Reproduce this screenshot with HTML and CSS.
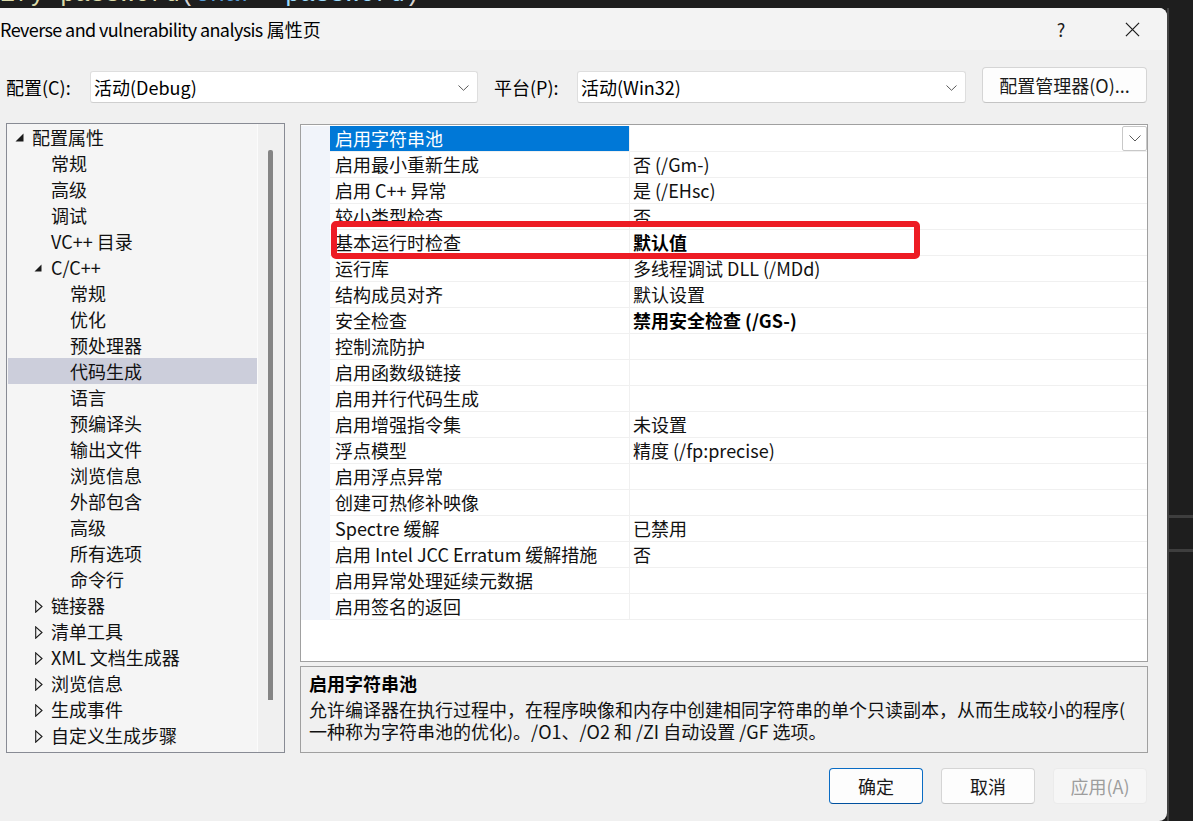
FILE: index.html
```html
<!DOCTYPE html>
<html lang="zh-CN">
<head>
<meta charset="utf-8">
<title>属性页</title>
<link rel="stylesheet" href="styles.css">
</head>
<body>
<div class="code"><div class="code-text"><span class="c-fn">ify password</span><span class="c-p">(</span><span class="c-kw">char</span><span class="c-p">* </span><span class="c-var">password</span><span class="c-p">)</span></div></div>
<div class="stage">
  <div class="dialog">
    <div class="titlebar">
      <span class="title"><span class="title-en">Reverse and vulnerability analysis</span> 属性页</span>
      <span class="help">?</span>
      <span class="close"><svg width="16" height="16" viewBox="0 0 16 16"><path d="M1 1 L15 15 M15 1 L1 15" stroke="#1a1a1a" stroke-width="1.3" fill="none"/></svg></span>
    </div>
    <div class="config">
      <span class="lbl lbl1">配置(C):</span>
      <div class="combo combo1"><span>活动(Debug)</span><svg class="chev" width="11" height="6" viewBox="0 0 11 6"><path d="M0.5 0.5 L5.5 5.3 L10.5 0.5" stroke="#5a5a5a" stroke-width="1" fill="none"/></svg></div>
      <span class="lbl lbl2">平台(P):</span>
      <div class="combo combo2"><span>活动(Win32)</span><svg class="chev" width="11" height="6" viewBox="0 0 11 6"><path d="M0.5 0.5 L5.5 5.3 L10.5 0.5" stroke="#5a5a5a" stroke-width="1" fill="none"/></svg></div>
      <button class="btn mgr">配置管理器(O)...</button>
    </div>
    <div class="main">
      <div class="tree">
        <div class="tree-list">
          <div class="trow l0"><span class="tog"><svg width="9" height="9" viewBox="0 0 9 9"><path d="M8.5 0.5 L8.5 8.5 L0.5 8.5 Z" fill="#1a1a1a"/></svg></span>配置属性</div>
          <div class="trow l1"><span class="tog"></span>常规</div>
          <div class="trow l1"><span class="tog"></span>高级</div>
          <div class="trow l1"><span class="tog"></span>调试</div>
          <div class="trow l1"><span class="tog"></span>VC++ 目录</div>
          <div class="trow l1"><span class="tog"><svg width="8" height="8" viewBox="0 0 8 8"><path d="M7.5 0.5 L7.5 7.5 L0.5 7.5 Z" fill="#1a1a1a"/></svg></span>C/C++</div>
          <div class="trow l2"><span class="tog"></span>常规</div>
          <div class="trow l2"><span class="tog"></span>优化</div>
          <div class="trow l2"><span class="tog"></span>预处理器</div>
          <div class="trow l2 sel"><span class="tog"></span>代码生成</div>
          <div class="trow l2"><span class="tog"></span>语言</div>
          <div class="trow l2"><span class="tog"></span>预编译头</div>
          <div class="trow l2"><span class="tog"></span>输出文件</div>
          <div class="trow l2"><span class="tog"></span>浏览信息</div>
          <div class="trow l2"><span class="tog"></span>外部包含</div>
          <div class="trow l2"><span class="tog"></span>高级</div>
          <div class="trow l2"><span class="tog"></span>所有选项</div>
          <div class="trow l2"><span class="tog"></span>命令行</div>
          <div class="trow l1"><span class="tog"><svg class="col" width="8" height="13" viewBox="0 0 8 13"><path d="M0.7 0.8 L7 6.5 L0.7 12.2 Z" stroke="#1a1a1a" stroke-width="1.1" fill="none"/></svg></span>链接器</div>
          <div class="trow l1"><span class="tog"><svg class="col" width="8" height="13" viewBox="0 0 8 13"><path d="M0.7 0.8 L7 6.5 L0.7 12.2 Z" stroke="#1a1a1a" stroke-width="1.1" fill="none"/></svg></span>清单工具</div>
          <div class="trow l1"><span class="tog"><svg class="col" width="8" height="13" viewBox="0 0 8 13"><path d="M0.7 0.8 L7 6.5 L0.7 12.2 Z" stroke="#1a1a1a" stroke-width="1.1" fill="none"/></svg></span>XML 文档生成器</div>
          <div class="trow l1"><span class="tog"><svg class="col" width="8" height="13" viewBox="0 0 8 13"><path d="M0.7 0.8 L7 6.5 L0.7 12.2 Z" stroke="#1a1a1a" stroke-width="1.1" fill="none"/></svg></span>浏览信息</div>
          <div class="trow l1"><span class="tog"><svg class="col" width="8" height="13" viewBox="0 0 8 13"><path d="M0.7 0.8 L7 6.5 L0.7 12.2 Z" stroke="#1a1a1a" stroke-width="1.1" fill="none"/></svg></span>生成事件</div>
          <div class="trow l1"><span class="tog"><svg class="col" width="8" height="13" viewBox="0 0 8 13"><path d="M0.7 0.8 L7 6.5 L0.7 12.2 Z" stroke="#1a1a1a" stroke-width="1.1" fill="none"/></svg></span>自定义生成步骤</div>
        </div>
        <div class="tree-scroll"><div class="thumb"></div></div>
      </div>
      <div class="right">
        <div class="grid">
          <div class="prow"><div class="gut"></div><div class="pname sel">启用字符串池</div><div class="pval"><span></span><span class="dd"><svg width="12" height="7" viewBox="0 0 12 7"><path d="M0.5 0.5 L6 6 L11.5 0.5" stroke="#5a5a5a" stroke-width="1" fill="none"/></svg></span></div></div>
          <div class="prow"><div class="gut"></div><div class="pname">启用最小重新生成</div><div class="pval">否 (/Gm-)</div></div>
          <div class="prow"><div class="gut"></div><div class="pname">启用 C++ 异常</div><div class="pval">是 (/EHsc)</div></div>
          <div class="prow"><div class="gut"></div><div class="pname">较小类型检查</div><div class="pval">否</div></div>
          <div class="prow"><div class="gut"></div><div class="pname">基本运行时检查</div><div class="pval b">默认值</div></div>
          <div class="prow"><div class="gut"></div><div class="pname">运行库</div><div class="pval">多线程调试 DLL (/MDd)</div></div>
          <div class="prow"><div class="gut"></div><div class="pname">结构成员对齐</div><div class="pval">默认设置</div></div>
          <div class="prow"><div class="gut"></div><div class="pname">安全检查</div><div class="pval b">禁用安全检查 (/GS-)</div></div>
          <div class="prow"><div class="gut"></div><div class="pname">控制流防护</div><div class="pval"></div></div>
          <div class="prow"><div class="gut"></div><div class="pname">启用函数级链接</div><div class="pval"></div></div>
          <div class="prow"><div class="gut"></div><div class="pname">启用并行代码生成</div><div class="pval"></div></div>
          <div class="prow"><div class="gut"></div><div class="pname">启用增强指令集</div><div class="pval">未设置</div></div>
          <div class="prow"><div class="gut"></div><div class="pname">浮点模型</div><div class="pval">精度 (/fp:precise)</div></div>
          <div class="prow"><div class="gut"></div><div class="pname">启用浮点异常</div><div class="pval"></div></div>
          <div class="prow"><div class="gut"></div><div class="pname">创建可热修补映像</div><div class="pval"></div></div>
          <div class="prow"><div class="gut"></div><div class="pname">Spectre 缓解</div><div class="pval">已禁用</div></div>
          <div class="prow"><div class="gut"></div><div class="pname">启用 Intel JCC Erratum 缓解措施</div><div class="pval">否</div></div>
          <div class="prow"><div class="gut"></div><div class="pname">启用异常处理延续元数据</div><div class="pval"></div></div>
          <div class="prow"><div class="gut"></div><div class="pname">启用签名的返回</div><div class="pval"></div></div>
          <div class="mark"></div>
        </div>
        <div class="desc">
          <div class="desc-title">启用字符串池</div>
          <div class="desc-text">允许编译器在执行过程中，在程序映像和内存中创建相同字符串的单个只读副本，从而生成较小的程序(</div>
          <div class="desc-text">一种称为字符串池的优化)。/O1、/O2 和 /ZI 自动设置 /GF 选项。</div>
        </div>
      </div>
    </div>
    <div class="actions">
      <button class="btn act primary">确定</button>
      <button class="btn act">取消</button>
      <button class="btn act disabled">应用(A)</button>
    </div>
  </div>
  <div class="side"><div class="sline"></div><div class="sline s2"></div></div>
</div>
</body>
</html>
```

FILE: styles.css
```css
* { box-sizing: border-box; }
html, body { margin: 0; padding: 0; }
body {
  background: #1e1e1e;
  font-family: "Noto Sans CJK SC", "Noto Sans", sans-serif;
  font-size: 18px;
  color: #000;
  width: 1193px;
  height: 821px;
  overflow: hidden;
}
.code { height: 8px; overflow: hidden; }
.code-text {
  font-family: "Liberation Mono", monospace;
  font-size: 25px;
  line-height: 25px;
  margin-top: -18px;
  white-space: nowrap;
  color: #d4d4d4;
}
.c-fn { color: #dcdcaa; }
.c-p { color: #d4d4d4; }
.c-kw { color: #569cd6; }
.c-var { color: #9cdcfe; }

.stage { display: flex; height: 813px; }
.dialog {
  width: 1167px;
  background: #f0f0f0;
  border-radius: 0 8px 8px 0;
  display: flex;
  flex-direction: column;
}
.titlebar {
  height: 42px;
  background: #f3f3f3;
  border-radius: 0 8px 0 0;
  display: flex;
  align-items: center;
  padding-left: 0;
  padding-right: 12px;
}
.title { flex: 1; line-height: 24px; white-space: nowrap; }
.title-en { letter-spacing: -0.6px; }
.help { width: 40px; text-align: center; color: #1a1a1a; line-height: 24px; }
.close { width: 46px; margin-left: 28px; display: flex; justify-content: center; align-items: center; height: 24px; }
.close svg { width: 15px; height: 15px; }

.config {
  display: flex;
  align-items: flex-start;
  padding-left: 6px;
  margin-top: 17px;
  height: 36px;
}
.lbl { line-height: 36px; white-space: nowrap; margin-top: 2px; }
.lbl1 { width: 84px; }
.lbl2 { width: 83px; margin-left: 16px; }
.combo {
  height: 32px;
  margin-top: 4px;
  background: #fff;
  border: 1px solid #dedede;
  border-bottom-color: #cfcfcf;
  border-radius: 3px;
  display: flex;
  align-items: center;
  justify-content: space-between;
  padding: 0 8px 0 3px;
  line-height: 30px;
}
.combo1 { width: 388px; }
.combo2 { width: 389px; }
.chev { margin-top: 1px; }
.btn {
  font-family: "Noto Sans CJK SC", "Noto Sans", sans-serif;
  font-size: 18px;
  background: #fdfdfd;
  border: 1px solid #d5d5d5;
  border-bottom-color: #c4c4c4;
  border-radius: 4px;
  color: #1a1a1a;
  padding: 0;
  height: 36px;
  line-height: 34px;
}
.mgr { width: 165px; margin-left: 16px; }

.main {
  display: flex;
  margin-top: 20px;
  padding-left: 6px;
  gap: 15px;
}
.tree {
  width: 279px;
  height: 630px;
  border: 1px solid #888b94;
  display: flex;
  background: #f5f5f5;
}
.tree-list { width: 250px; padding-left: 1px; }
.trow {
  height: 26px;
  line-height: 26px;
  display: flex;
  align-items: center;
  white-space: nowrap;
  color: #111;
}
.trow.l0 { padding-left: 7px; }
.trow.l1 { padding-left: 26px; }
.trow.l2 { padding-left: 45px; }
.trow.sel { background: #cccedb; }
.tog { width: 17px; height: 26px; display: flex; align-items: center; padding-top: 1px; }
.tog .col { margin-left: 1px; margin-top: 2px; }
.tree-scroll {
  flex: 1;
  background: #f0f0f0;
  border-left: 1px solid #fbfbfb;
  padding-top: 26px;
}
.thumb {
  width: 5px;
  height: 550px;
  margin-left: 10px;
  background: #858585;
  border-radius: 2px 2px 0 0;
}

.right { width: 848px; margin-top: 1px; display: flex; flex-direction: column; }
.grid {
  position: relative;
  height: 538px;
  background: #fff;
  border: 1px solid #a0a0a0;
  padding-top: 1px;
}
.prow { display: flex; height: 26px; }
.gut { width: 29px; background: #f1f4fa; }
.pname {
  width: 300px;
  padding-left: 5px;
  border-right: 1px solid #f0f0f0;
  border-bottom: 1px solid #f0f0f0;
  line-height: 25px;
  white-space: nowrap;
  color: #111;
}
.pname.sel { background: #0078d7; color: #fff; }
.pval {
  flex: 1;
  padding-left: 3px;
  border-bottom: 1px solid #f0f0f0;
  line-height: 25px;
  white-space: nowrap;
  display: flex;
  justify-content: space-between;
  color: #111;
}
.pval.b { font-weight: 700; color: #000; }
.dd {
  width: 25px;
  height: 25px;
  border: 1px solid #c8c8c8;
  border-radius: 2px;
  background: #fff;
  display: flex;
  align-items: center;
  justify-content: center;
}
.mark {
  position: absolute;
  left: 30px;
  top: 96px;
  width: 589px;
  height: 38px;
  border: 6px solid #ed1c24;
  border-radius: 5px;
}
.desc {
  margin-top: 4px;
  height: 87px;
  border: 1px solid #a0a0a0;
  background: #f0f0f0;
  padding: 5px 8px 0 8px;
}
.desc-title { font-weight: 700; line-height: 22px; height: 26px; }
.desc-text { height: 22px; line-height: 22px; white-space: nowrap; color: #111; }

.actions {
  display: flex;
  justify-content: flex-end;
  gap: 18px;
  margin-top: 15px;
  padding-right: 20px;
}
.act { width: 94px; }
.primary { border: 1px solid #0a6cc4; border-bottom-color: #00509e; }
.disabled { background: #f6f6f6; border-color: #ebebeb; color: #9d9d9d; }

.side {
  flex: 1;
  border-left: 2px solid #424242;
  padding-top: 507px;
  display: flex;
  flex-direction: column;
}
.sline { height: 3px; background: #3e3e3e; }
.sline.s2 { margin-top: 31px; }
```
